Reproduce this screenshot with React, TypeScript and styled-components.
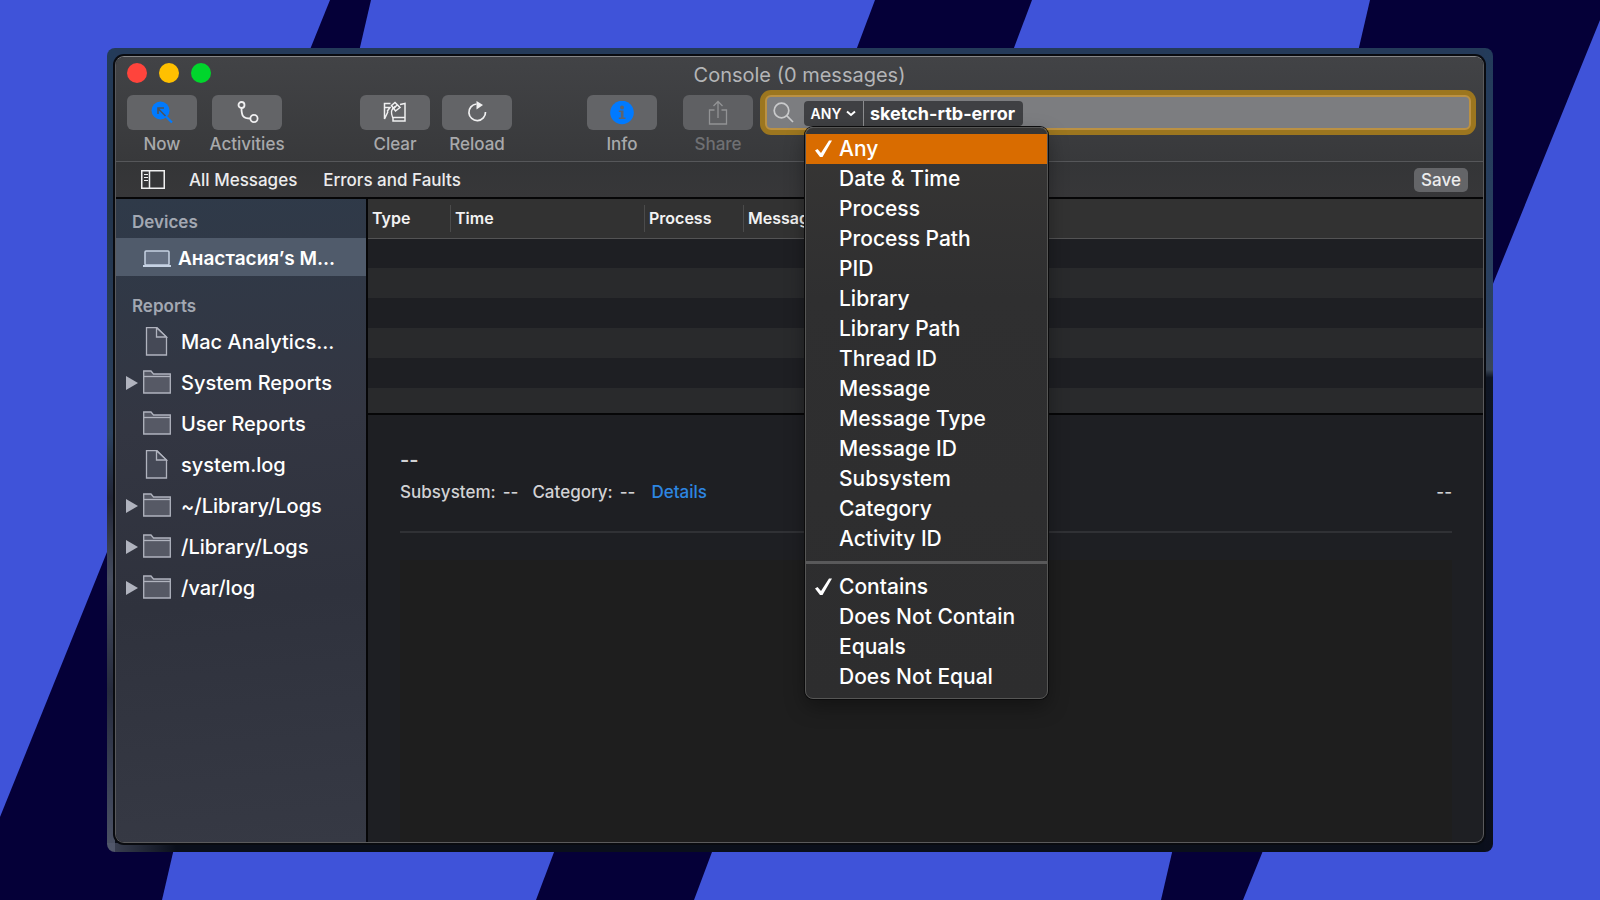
import React from "react";
import styled, { createGlobalStyle } from "styled-components";

const GlobalStyle = createGlobalStyle`
  *, *::before, *::after { box-sizing: border-box; }
  body { margin: 0; background: #3f53d9; }
  body, button, input { font-family: Inter, "Liberation Sans", sans-serif; }
  button, input { margin: 0; padding: 0; border: 0; background: none; color: inherit; }
  svg { display: block; flex: none; }
`;

const Desktop = styled.div`
  position: relative;
  display: flex;
  min-height: 100vh;
  padding: 48px 107px;
`;

const Stripes = styled.svg`
  position: absolute;
  inset: 0;
  width: 100%;
  height: 100%;
`;

const Frame = styled.div`
  position: relative;
  display: flex;
  flex: 1;
  min-width: 0;
  padding: 8px 9px 9px 8px;
  border-radius: 8px;
  background:
    linear-gradient(90deg, rgba(84, 90, 110, 0.7), rgba(84, 90, 110, 0) 5%) bottom / 100% 9px no-repeat,
    linear-gradient(180deg, #233b5a 0%, #2b4160 34%, #3a4656 40%, #0f1624 41%, #0b0f1c 100%) right / 9px 100% no-repeat,
    linear-gradient(180deg, #233b5a 0%, #22344c 20%, #2c4260 48%, #222637 56%, #454c5e 66%, #262b3d 80%, #3c4357 92%, #4c5264 100%) left / 8px 100% no-repeat,
    linear-gradient(180deg, #243a59 0 50%, #0a0f1b 50%);
`;

const Window = styled.main`
  display: flex;
  flex: 1;
  flex-direction: column;
  min-width: 0;
  border: 1px solid #5a5a5c;
  border-top-color: #858688;
  border-radius: 9px;
  background: #1e1f23;
  box-shadow: 0 0 0 2px #090b10;
  color: #fff;
`;

const Header = styled.header`
  border-bottom: 1px solid #56575a;
  border-radius: 8px 8px 0 0;
  background: linear-gradient(#424346, #38393b);
`;

const TitleBar = styled.div`
  display: grid;
  grid-template-columns: 1fr auto 1fr;
  align-items: center;
  height: 38px;
  padding: 0 11px;
`;

const Lights = styled.div`
  display: flex;
  gap: 12px;
  padding-bottom: 6px;
`;

const Light = styled.button<{ $color: string }>`
  width: 20px;
  height: 20px;
  border-radius: 50%;
  background: ${(p) => p.$color};
`;

const Title = styled.h1`
  margin: 0;
  padding-bottom: 2px;
  color: #b4b5b7;
  font-size: 20px;
  font-weight: 400;
  line-height: 24px;
`;

const Toolbar = styled.div`
  display: flex;
  align-items: flex-start;
  height: 66px;
  padding: 0 12px 0 11px;
`;

const Group = styled.div<{ $gap: number; $after: number }>`
  display: flex;
  gap: ${(p) => p.$gap}px;
  margin-right: ${(p) => p.$after}px;
`;

const Tool = styled.button<{ $dim?: boolean }>`
  display: flex;
  flex: none;
  flex-direction: column;
  align-items: center;
  gap: 4px;
  width: 70px;
  color: ${(p) => (p.$dim ? "#6f7073" : "#a8a9ab")};
  font-size: 17px;
  font-weight: 500;
  line-height: 20px;
  white-space: nowrap;
`;

const ToolFace = styled.span<{ $dim?: boolean }>`
  display: flex;
  align-items: center;
  justify-content: center;
  width: 70px;
  height: 35px;
  border-radius: 6px;
  background: ${(p) => (p.$dim ? "#5f6063" : "#636467")};
  color: ${(p) => (p.$dim ? "#929395" : "#f0f0f1")};
`;

const SearchField = styled.div`
  position: relative;
  display: flex;
  flex: 1;
  align-items: center;
  min-width: 0;
  height: 35px;
  border: 2px solid #bb9143;
  border-radius: 6px;
  background: #7c7d80;
  box-shadow: 0 0 0 5px #9c761f;
  padding-left: 6px;
`;

const Token = styled.div`
  display: flex;
  gap: 1px;
  height: 25px;
  margin: 2px 0 0 10px;
  border-radius: 4px;
  background: #8b8c8e;
  overflow: hidden;
`;

const Scope = styled.button`
  display: flex;
  align-items: center;
  justify-content: center;
  gap: 5px;
  width: 59px;
  background: #3f4043;
  font-size: 14px;
  font-weight: 600;
`;

const Query = styled.input`
  width: 159px;
  padding-left: 6px;
  background: #3f4043;
  font-size: 18px;
  font-weight: 700;
  outline: 0;
`;

const Menu = styled.div`
  position: absolute;
  top: 30px;
  left: 38px;
  z-index: 2;
  width: 243px;
  padding: 6px 0;
  border: 1px solid #565655;
  border-radius: 8px;
  background: linear-gradient(#373635, #2f2f30 30%, #2d2d2e);
  box-shadow: 0 0 0 1px #0c0c0d, 0 8px 20px rgba(0, 0, 0, 0.35);
`;

const MenuItem = styled.button<{ $active?: boolean }>`
  display: flex;
  align-items: center;
  width: 100%;
  height: 30px;
  background: ${(p) => (p.$active ? "#d96c00" : "transparent")};
  color: #fff;
  font-size: 21px;
  font-weight: 500;
  line-height: 30px;
  white-space: nowrap;
`;

const Mark = styled.span`
  display: flex;
  flex: none;
  width: 33px;
  padding-left: 8px;
`;

const MenuRule = styled.hr`
  height: 3px;
  margin: 7px 0 8px;
  border: 0;
  background: #59595a;
`;

const FilterBar = styled.nav`
  display: flex;
  align-items: center;
  height: 37px;
  padding: 0 15px 0 25px;
  border-bottom: 2px solid #060607;
  background: linear-gradient(#343537, #373739);
`;

const Filter = styled.button<{ $before: number }>`
  margin-left: ${(p) => p.$before}px;
  color: #ececed;
  font-size: 17px;
  font-weight: 500;
  line-height: 24px;
`;

const Save = styled.button`
  width: 54px;
  height: 24px;
  margin-left: auto;
  border-radius: 5px;
  background: #646568;
  color: #ececed;
  font-size: 17px;
  font-weight: 500;
`;

const Body = styled.div`
  display: flex;
  flex: 1;
  min-height: 0;
`;

const Sidebar = styled.aside`
  flex: none;
  width: 252px;
  border-right: 2px solid #060607;
  border-bottom-left-radius: 8px;
  background: linear-gradient(175deg, #2f3a49, #333642 35%, #2f323d 62%, #363944);
`;

const Heading = styled.h2<{ $height: number; $top: number }>`
  display: flex;
  align-items: center;
  height: ${(p) => p.$height}px;
  margin: 0;
  padding: ${(p) => p.$top}px 0 0 16px;
  color: #a3a8b2;
  font-size: 17px;
  font-weight: 600;
`;

const List = styled.ul`
  margin: 0;
  padding: 0;
  list-style: none;
`;

const Source = styled.button<{ $selected?: boolean }>`
  display: grid;
  grid-template-columns: 17px 28px 1fr;
  align-items: center;
  width: 100%;
  height: ${(p) => (p.$selected ? 38 : 41)}px;
  padding: ${(p) => (p.$selected ? 4 : 0)}px 0 0 10px;
  background: ${(p) => (p.$selected ? "#505b6b" : "transparent")};
  color: #fff;
  font-size: ${(p) => (p.$selected ? 19 : 20)}px;
  font-weight: ${(p) => (p.$selected ? 600 : 500)};
  line-height: 24px;
  text-align: left;
  white-space: nowrap;
`;

const SourceName = styled.span<{ $selected?: boolean }>`
  padding-left: ${(p) => (p.$selected ? 7 : 10)}px;
`;

const Content = styled.section`
  display: flex;
  flex: 1;
  flex-direction: column;
  min-width: 0;
`;

const LogTable = styled.table`
  width: 100%;
  border-collapse: collapse;
  table-layout: fixed;
`;

const HeadCell = styled.th<{ $width?: number }>`
  width: ${(p) => (p.$width ? `${p.$width}px` : "auto")};
  height: 39px;
  padding: 0 0 0 4px;
  border-bottom: 1px solid #535354;
  background:
    linear-gradient(#4b4b4b, #4b4b4b) right 6px / 1px 27px no-repeat,
    #323232;
  color: #f2f2f2;
  font-size: 16px;
  font-weight: 600;
  line-height: 20px;
  text-align: left;

  &:last-child { background: #323232; }
`;

const LogRow = styled.tr<{ $short?: boolean }>`
  height: ${(p) => (p.$short ? 25 : 30)}px;
  background: #1e1f23;

  &:nth-child(even) { background: #292a2c; }
  td { padding: 0; }
`;

const Detail = styled.article`
  display: flex;
  flex: 1;
  flex-direction: column;
  padding: 33px 31px 0 32px;
  border-top: 2px solid #060607;
  color: #d2d2d4;
  font-size: 17px;
  font-weight: 500;
  line-height: 24px;
`;

const Summary = styled.div`
  font-size: 20px;
  font-weight: 600;
`;

const Meta = styled.div`
  display: flex;
  gap: 14px;
  margin-top: 8px;
  padding-bottom: 27px;
  border-bottom: 2px solid #303135;
`;

const Pair = styled.span`
  display: flex;
  gap: 7px;
`;

const DetailsLink = styled.a`
  margin-left: 2px;
  color: #2d86e2;
  text-decoration: none;
`;

const Trailing = styled.span`
  margin-left: auto;
`;

const Payload = styled.div`
  flex: 1;
  margin-top: 27px;
  background: #1e1e1e;
`;

const NowIcon = () => (
  <svg width="24" height="24" viewBox="0 0 24 24" fill="none">
    <circle cx="10.500" cy="9.500" r="9" fill="#007aff" />
    <path d="M16 15.500 L22 21.500" stroke="#007aff" strokeWidth="2.200" />
    <path d="M15.500 15 L8.500 8 M8 13 V7 H14" stroke="#4b545f" strokeWidth="1.600" />
  </svg>
);

const ActivitiesIcon = () => (
  <svg width="24" height="24" viewBox="0 0 24 24" fill="none" stroke="currentColor" strokeWidth="1.800">
    <circle cx="6.500" cy="4" r="3" />
    <circle cx="19" cy="17.500" r="3.600" />
    <path d="M6.500 7 C6.500 15 8 17.500 15.500 17.500" />
  </svg>
);

const ClearIcon = () => (
  <svg width="24" height="24" viewBox="0 0 24 24" fill="none" stroke="currentColor" strokeWidth="1.500">
    <path d="M7.500 2.500 H1.500 V18 L5 10.500 M2 6.500 H7 L4 10.500" />
    <path d="M8.500 4.500 L12 1.500 L17 6.500 L12.500 10 Z M11 7 L14.500 3.800" />
    <path d="M12.500 5.500 C8.500 7.500 7 10.500 10 17.500 M17 3.500 L22 2.500 V20 H10 V16.500 H22" />
  </svg>
);

const ReloadIcon = () => (
  <svg width="24" height="24" viewBox="0 0 24 24" fill="none">
    <path d="M11.500 3 A8.300 8.300 0 1 0 20.500 11" stroke="currentColor" strokeWidth="1.700" />
    <path d="M11.500 0 L18 4 L11.500 8.500 Z" fill="currentColor" />
  </svg>
);

const InfoIcon = () => (
  <svg width="24" height="24" viewBox="0 0 24 24">
    <circle cx="12" cy="11.500" r="11.800" fill="#007aff" />
    <circle cx="12" cy="6.500" r="2" fill="#5c6470" />
    <path d="M8.800 9.500 H13.500 V16.500 H15.500 V18 H8.800 V16.500 H10.800 V11 H8.800 Z" fill="#5c6470" />
  </svg>
);

const ShareIcon = () => (
  <svg width="24" height="26" viewBox="0 0 24 26" fill="none" stroke="currentColor" strokeWidth="1.300">
    <path d="M8.500 10 H3.500 V24 H20.500 V10 H15.500" />
    <path d="M12 18 V1.500 M7.500 6 L12 1.500 L16.500 6" />
  </svg>
);

const SearchIcon = () => (
  <svg width="21" height="21" viewBox="0 0 21 21" fill="none" stroke="#c9cacb" strokeWidth="1.700">
    <circle cx="8.500" cy="8.500" r="7.300" />
    <path d="M13.700 13.700 L20 20" />
  </svg>
);

const ChevronIcon = () => (
  <svg width="10" height="7" viewBox="0 0 10 7" fill="none" stroke="currentColor" strokeWidth="2">
    <path d="M1 1.500 L5 5 L9 1.500" />
  </svg>
);

const CheckIcon = () => (
  <svg width="19" height="18" viewBox="0 0 19 18" fill="currentColor">
    <path d="M1 10.500 L3.500 9 L7 13 L15 0.500 L18 0.500 L8.500 17 L6 17 Z" />
  </svg>
);

const PanelIcon = () => (
  <svg width="24" height="19" viewBox="0 0 24 19" fill="none" stroke="#f0f0f1">
    <rect x="0.750" y="0.750" width="22.500" height="17.500" strokeWidth="1.500" />
    <path d="M8.500 1 V18" strokeWidth="1.500" />
    <path d="M3 4.500 H7 M3 7.500 H7 M3 10.500 H7" />
  </svg>
);

const LaptopIcon = () => (
  <svg width="28" height="18" viewBox="0 0 28 18" fill="none" stroke="#c6d2e4">
    <rect x="2" y="1" width="24" height="14" rx="1" fill="#667184" strokeWidth="1.500" />
    <path d="M0 16 H28" strokeWidth="2" />
  </svg>
);

const FileIcon = () => (
  <svg width="28" height="30" viewBox="0 0 28 30" fill="#454956" stroke="#b0b3be" strokeWidth="1.300">
    <path d="M3.500 0.700 H14 L23.500 10 V28 H3.500 Z" />
    <path d="M13.500 0.700 V10 H23.500 Z" />
  </svg>
);

const FolderIcon = () => (
  <svg width="28" height="26" viewBox="0 0 28 26" fill="#565965" stroke="#b0b3be" strokeWidth="1.300">
    <path d="M0.700 23 V1 H8 L10.500 4 H27.300 V23 Z" />
    <path d="M0.700 6.500 H27.300" />
  </svg>
);

const Disclosure = () => (
  <svg width="12" height="14" viewBox="0 0 12 14" fill="#b0b3be">
    <path d="M0 0 L12 7 L0 14 Z" />
  </svg>
);

const fields = [
  "Any", "Date & Time", "Process", "Process Path", "PID", "Library", "Library Path",
  "Thread ID", "Message", "Message Type", "Message ID", "Subsystem", "Category", "Activity ID",
];
const operators = ["Contains", "Does Not Contain", "Equals", "Does Not Equal"];

const reports = [
  { name: "Mac Analytics...", file: true },
  { name: "System Reports", open: true },
  { name: "User Reports" },
  { name: "system.log", file: true },
  { name: "~/Library/Logs", open: true },
  { name: "/Library/Logs", open: true },
  { name: "/var/log", open: true },
];

const Option = ({ label, checked, active }: { label: string; checked: boolean; active?: boolean }) => (
  <MenuItem type="button" role="menuitemradio" aria-checked={checked} $active={active}>
    <Mark>{checked && <CheckIcon />}</Mark>
    {label}
  </MenuItem>
);

const ToolButton = ({ label, dim, children }: { label: string; dim?: boolean; children: React.ReactNode }) => (
  <Tool type="button" $dim={dim}>
    <ToolFace $dim={dim}>{children}</ToolFace>
    {label}
  </Tool>
);

export default function App() {
  return (
    <>
      <GlobalStyle />
      <Desktop>
        <Stripes viewBox="0 0 1600 900" preserveAspectRatio="none" fill="#050038" aria-hidden="true">
          <path d="M330 0 H371 L162 900 H0 V817 Z" />
          <path d="M875 0 H1032 L694 900 H536 Z" />
          <path d="M1370 0 H1600 V20 L1243 900 H1161 Z" />
        </Stripes>
        <Frame>
          <Window>
            <Header>
              <TitleBar>
                <Lights>
                  <Light type="button" aria-label="Close" $color="#ff443c" />
                  <Light type="button" aria-label="Minimize" $color="#ffc000" />
                  <Light type="button" aria-label="Zoom" $color="#00d62c" />
                </Lights>
                <Title>Console (0 messages)</Title>
              </TitleBar>
              <Toolbar>
                <Group $gap={15} $after={78}>
                  <ToolButton label="Now"><NowIcon /></ToolButton>
                  <ToolButton label="Activities"><ActivitiesIcon /></ToolButton>
                </Group>
                <Group $gap={12} $after={75}>
                  <ToolButton label="Clear"><ClearIcon /></ToolButton>
                  <ToolButton label="Reload"><ReloadIcon /></ToolButton>
                </Group>
                <Group $gap={26} $after={12}>
                  <ToolButton label="Info"><InfoIcon /></ToolButton>
                  <ToolButton label="Share" dim><ShareIcon /></ToolButton>
                </Group>
                <SearchField role="search">
                  <SearchIcon />
                  <Token>
                    <Scope type="button" aria-haspopup="menu" aria-expanded="true">
                      ANY <ChevronIcon />
                    </Scope>
                    <Query type="text" aria-label="Search" defaultValue="sketch-rtb-error" />
                  </Token>
                  <Menu role="menu">
                    {fields.map((f) => (
                      <Option key={f} label={f} checked={f === "Any"} active={f === "Any"} />
                    ))}
                    <MenuRule />
                    {operators.map((o) => (
                      <Option key={o} label={o} checked={o === "Contains"} />
                    ))}
                  </Menu>
                </SearchField>
              </Toolbar>
            </Header>
            <FilterBar>
              <PanelIcon />
              <Filter type="button" $before={24}>All Messages</Filter>
              <Filter type="button" $before={26}>Errors and Faults</Filter>
              <Save type="button">Save</Save>
            </FilterBar>
            <Body>
              <Sidebar>
                <Heading $height={39} $top={6}>Devices</Heading>
                <List>
                  <li>
                    <Source type="button" $selected>
                      <span />
                      <LaptopIcon />
                      <SourceName $selected>Анастасия’s M...</SourceName>
                    </Source>
                  </li>
                </List>
                <Heading $height={45} $top={14}>Reports</Heading>
                <List>
                  {reports.map((r) => (
                    <li key={r.name}>
                      <Source type="button">
                        <span>{r.open && <Disclosure />}</span>
                        {r.file ? <FileIcon /> : <FolderIcon />}
                        <SourceName>{r.name}</SourceName>
                      </Source>
                    </li>
                  ))}
                </List>
              </Sidebar>
              <Content>
                <LogTable>
                  <thead>
                    <tr>
                      <HeadCell $width={83}>Type</HeadCell>
                      <HeadCell $width={194}>Time</HeadCell>
                      <HeadCell $width={99}>Process</HeadCell>
                      <HeadCell>Message</HeadCell>
                    </tr>
                  </thead>
                  <tbody>
                    {[0, 1, 2, 3, 4, 5].map((i) => (
                      <LogRow key={i} $short={i === 5}>
                        <td colSpan={4} />
                      </LogRow>
                    ))}
                  </tbody>
                </LogTable>
                <Detail>
                  <Summary>--</Summary>
                  <Meta>
                    <Pair><span>Subsystem:</span><span>--</span></Pair>
                    <Pair><span>Category:</span><span>--</span></Pair>
                    <DetailsLink href="#details">Details</DetailsLink>
                    <Trailing>--</Trailing>
                  </Meta>
                  <Payload />
                </Detail>
              </Content>
            </Body>
          </Window>
        </Frame>
      </Desktop>
    </>
  );
}
